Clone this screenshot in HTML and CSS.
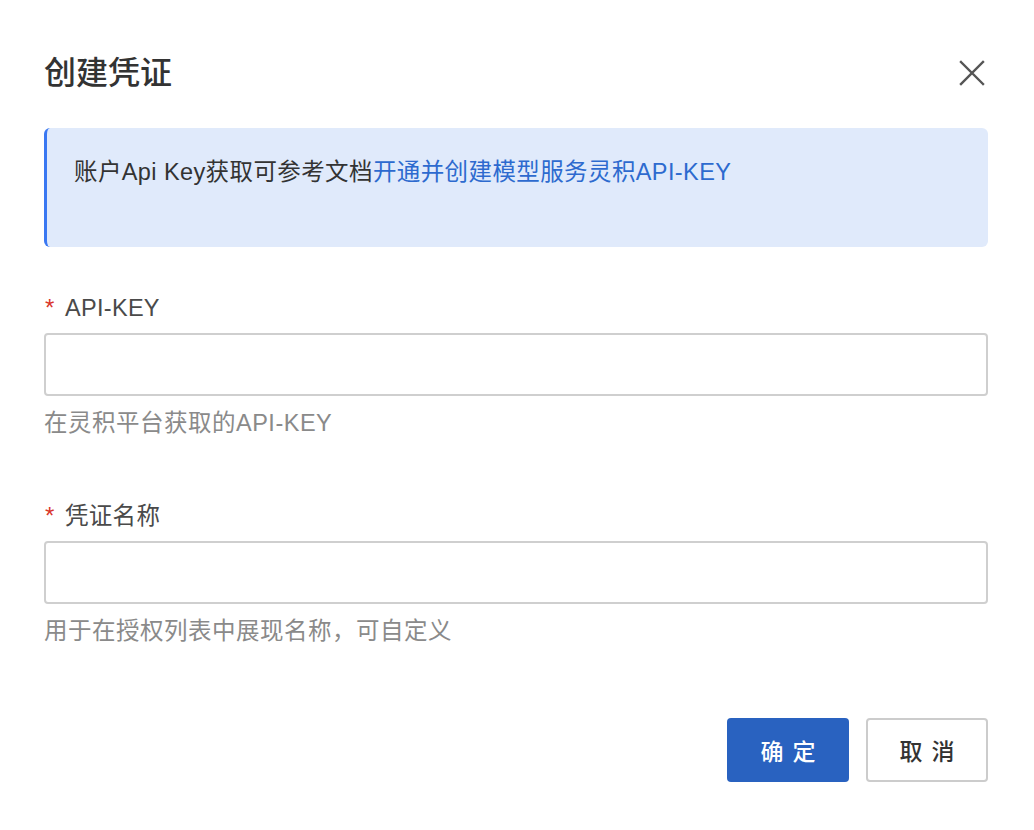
FILE: index.html
```html
<!DOCTYPE html>
<html lang="zh-CN">
<head>
<meta charset="utf-8">
<title>创建凭证</title>
<link rel="stylesheet" href="styles.css">
</head>
<body>
<div class="dialog">
  <div class="header">
    <h1 class="title">创建凭证</h1>
    <button class="close" aria-label="关闭">
      <svg width="26" height="26" viewBox="0 0 26 26"><path d="M2 2 L24 24 M24 2 L2 24" stroke="#555" stroke-width="2.4" stroke-linecap="square" fill="none"/></svg>
    </button>
  </div>
  <div class="alert">账户Api Key获取可参考文档<a class="link" href="#">开通并创建模型服务灵积API-KEY</a></div>
  <div class="field">
    <label class="label"><span class="req">*</span>API-KEY</label>
    <input class="input" type="text">
    <div class="help">在灵积平台获取的API-KEY</div>
  </div>
  <div class="field field-second">
    <label class="label"><span class="req">*</span>凭证名称</label>
    <input class="input" type="text">
    <div class="help">用于在授权列表中展现名称，可自定义</div>
  </div>
  <div class="footer">
    <button class="btn btn-primary">确定</button>
    <button class="btn btn-default">取消</button>
  </div>
</div>
</body>
</html>
```

FILE: styles.css
```css
* { box-sizing: border-box; }
html, body { margin: 0; padding: 0; background: #fff; }
body {
  font-family: "Liberation Sans", "Noto Sans CJK SC", sans-serif;
  color: #333;
}
.dialog {
  width: 1034px;
  height: 830px;
  padding: 53px 46px 0 44px;
}
.header {
  display: flex;
  align-items: center;
  justify-content: space-between;
  height: 40px;
}
.title {
  margin: 0;
  font-size: 32px;
  font-weight: 500;
  color: #333;
  line-height: 40px;
}
.close {
  border: 0;
  background: none;
  padding: 0;
  width: 26px;
  height: 26px;
  margin-right: 3px;
  display: flex;
}
.alert {
  margin-top: 35px;
  height: 119px;
  background: #e0eafb;
  border-left: 3px solid #3a78f2;
  border-radius: 6px;
  padding: 28px 27px 0;
  font-size: 23.5px;
  letter-spacing: 0.4px;
  line-height: 32px;
  color: #333;
}
.link {
  color: #2d6acf;
  text-decoration: none;
}
.field {
  margin-top: 45px;
  display: flex;
  flex-direction: column;
}
.field-second { margin-top: 61px; }
.label {
  font-size: 23.5px;
  letter-spacing: 0.3px;
  line-height: 32px;
  color: #4a4a4a;
  display: flex;
  align-items: center;
}
.req {
  color: #d9362b;
  width: 21px;
  padding-left: 1px;
  font-size: 24px;
}
.input {
  margin-top: 9px;
  height: 63px;
  width: 100%;
  border: 2px solid #cfcfcf;
  border-radius: 4px;
  background: #fff;
  outline: none;
  font-size: 22px;
}
.help {
  margin-top: 11px;
  font-size: 23.5px;
  letter-spacing: 0.5px;
  line-height: 32px;
  color: #8a8a8a;
}
.footer {
  margin-top: 71px;
  display: flex;
  justify-content: flex-end;
  gap: 17px;
}
.btn {
  width: 122px;
  height: 64px;
  border-radius: 4px;
  font-family: "Liberation Sans", "Noto Sans CJK SC", sans-serif;
  font-size: 23px;
  font-weight: 500;
  letter-spacing: 9px;
  text-indent: 9px;
  padding: 0;
}
.btn-primary {
  background: #2962c0;
  color: #fff;
  border: 0;
}
.btn-default {
  background: #fff;
  color: #333;
  border: 2px solid #cccccc;
}
```
